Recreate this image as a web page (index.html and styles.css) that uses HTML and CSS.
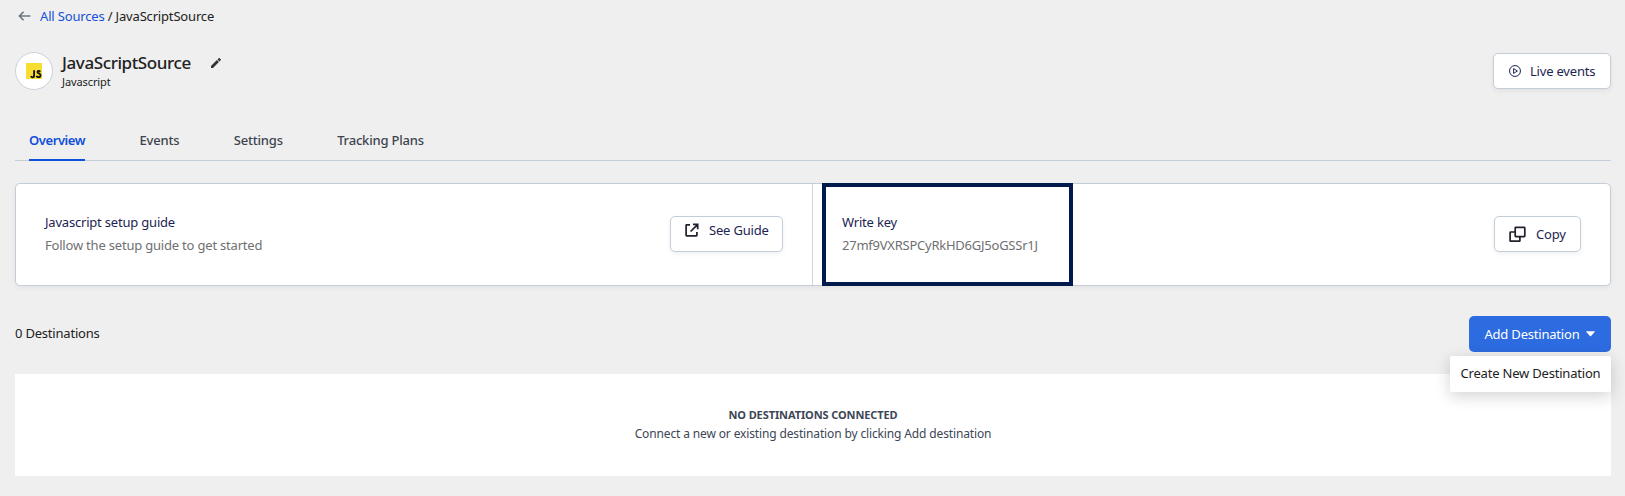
FILE: index.html
```html
<!DOCTYPE html>
<html lang="en">
<head>
<meta charset="utf-8">
<title>JavaScriptSource</title>
<link rel="stylesheet" href="styles.css">
</head>
<body>
<main class="page">
  <nav class="breadcrumb">
    <svg class="back" width="14" height="12" viewBox="0 0 14 12"><path d="M12.4 6H1.4M5.6 1.8 1.4 6l4.2 4.2"/></svg>
    <span><a class="link" href="#">All Sources</a> / JavaScriptSource</span>
  </nav>
  <header class="header">
    <div class="avatar"><span class="js-logo">
      <svg width="16" height="16" viewBox="0 0 16 16"><path d="M8.1 7.2v5.4c0 1.2-.6 1.7-1.5 1.7-.8 0-1.3-.4-1.6-1.1M14.2 8.8c-.4-.7-.8-1-1.5-1s-1.3.4-1.3 1.1c0 1.7 3.2 1.3 3.2 3.4 0 1.2-.8 1.9-2 1.9-1 0-1.8-.5-2.1-1.3"/></svg>
    </span></div>
    <div class="heading">
      <div class="title-row">
        <h1 class="title">JavaScriptSource</h1>
        <svg class="pencil" width="10" height="10" viewBox="0 0 10 10"><path d="M0 8 5.9 2.1l2 2L2 10H0zM6.5 1.5 7.7.3c.3-.3.7-.3 1 0l1 1c.3.3.3.7 0 1L8.5 3.5z"/></svg>
      </div>
      <div class="subtitle">Javascript</div>
    </div>
    <button class="button live">
      <svg class="icon" width="12" height="12" viewBox="0 0 12 12"><circle cx="6" cy="6" r="5.45"/><path d="M4.6 3.6v4.8L8.4 6z"/></svg>
      Live events
    </button>
  </header>
  <nav class="tabs">
    <a class="tab active">Overview</a>
    <a class="tab">Events</a>
    <a class="tab">Settings</a>
    <a class="tab">Tracking Plans</a>
  </nav>
  <section class="card">
    <div class="guide">
      <div class="info">
        <div class="label">Javascript setup guide</div>
        <div class="value">Follow the setup guide to get started</div>
      </div>
      <button class="button see-guide">
        <svg class="icon dark" width="14" height="14" viewBox="0 0 14 14"><path d="M5 1.8H1.7q-.6 0-.6.6v9.8q0 .6.6.6h9.6q.6 0 .6-.6V9M8 1.4h4.7v4.8M12.5 1.6 5.6 8.5"/></svg>
        See Guide
      </button>
    </div>
    <div class="key">
      <div class="key-box">
        <div class="label">Write key</div>
        <div class="value">27mf9VXRSPCyRkHD6GJ5oGSSr1J</div>
      </div>
      <button class="button copy">
        <svg class="icon dark" width="17" height="17" viewBox="0 0 17 17"><rect x="6.2" y="1.3" width="9.6" height="9.3" rx=".6"/><path d="M6 6H1.6q-.5 0-.5.5v8.2q0 .5.5.5h8.8q.5 0 .5-.5V11"/></svg>
        Copy
      </button>
    </div>
  </section>
  <section class="toolbar">
    <div class="count">0 Destinations</div>
    <div class="dropdown">
      <button class="add">Add Destination
        <svg width="9" height="6" viewBox="0 0 10 6"><path d="M.7 0h8.6q.9 0 .3.7L5.6 5.2q-.6.6-1.2 0L.4.7Q-.2 0 .7 0z" fill="#fff"/></svg>
      </button>
      <div class="menu">Create New Destination</div>
    </div>
  </section>
  <section class="empty">
    <div class="empty-title">NO DESTINATIONS CONNECTED</div>
    <div class="empty-text">Connect a new or existing destination by clicking Add destination</div>
  </section>
</main>
</body>
</html>
```
FILE: styles.css
```css
* { box-sizing: border-box; }
body {
  margin: 0;
  background: #efefef;
  color: #222;
  font: 13px/20px "Noto Sans", sans-serif;
  letter-spacing: -.2px;
}
.page { height: 496px; padding: 6px 14px 0 15px; }
.breadcrumb {
  display: flex;
  align-items: center;
  height: 20px;
  padding-left: 3px;
  gap: 8px;
  letter-spacing: -.17px;
}
.back { fill: none; stroke: #6b7580; stroke-width: 1.6; }
.link { color: #1551da; text-decoration: none; }
.header { display: flex; height: 38px; margin-top: 26px; align-items: flex-start; }
.avatar {
  display: grid;
  place-items: center;
  width: 38px;
  height: 38px;
  border: 1px solid #c9d2dc;
  border-radius: 50%;
  background: #fff;
}
.js-logo { width: 16px; height: 16px; background: #f5de31; }
.js-logo svg { display: block; fill: none; stroke: #111; stroke-width: 1.8; }
.heading { margin-left: 9px; }
.title-row { display: flex; height: 22px; align-items: center; gap: 20px; }
.title { margin: 0; font-size: 17px; line-height: 22px; font-weight: 500; letter-spacing: -.4px; }
.pencil { fill: #333; }
.subtitle { font-size: 11px; line-height: 16px; letter-spacing: -.1px; }
.button {
  display: flex;
  align-items: center;
  height: 36px;
  padding: 0 15px;
  border: 1px solid #c3ced9;
  border-radius: 5px;
  background: #fff;
  color: #1c2452;
  font: 13px/20px "Noto Sans", sans-serif;
  letter-spacing: -.2px;
  white-space: nowrap;
  box-shadow: 0 2px 5px rgba(0, 0, 0, .06);
}
.icon { flex: none; fill: none; stroke: #1c2452; stroke-width: 1; }
.icon.dark { stroke: #20212b; stroke-width: 1.7; }
.live { width: 118px; margin: 1px 0 0 auto; gap: 9px; }
.tabs {
  display: flex;
  height: 35px;
  margin-top: 36px;
  padding-left: 14px;
  gap: 54.4px;
  border-bottom: 1px solid #c3ced9;
}
.tab { height: 35px; padding-top: 4px; color: #3d4450; font-weight: 500; }
.tab.active {
  color: #0f4fdc;
  font-weight: 600;
  letter-spacing: -.42px;
  border-bottom: 2px solid #0f4fdc;
}
.card {
  display: flex;
  height: 103px;
  margin-top: 22px;
  border: 1px solid #c3ced9;
  border-radius: 5px;
  background: #fff;
  box-shadow: 0 2px 5px rgba(0, 0, 0, .05);
}
.guide {
  display: flex;
  width: 797px;
  padding: 32px 29px 0 29px;
  align-items: flex-start;
  justify-content: space-between;
  border-right: 1px solid #d2d6da;
}
.info { margin-top: -4px; }
.label { line-height: 20px; margin-bottom: 3px; color: #1c2452; }
.value { line-height: 20px; color: #6f7072; }
.see-guide { width: 113px; gap: 10px; padding: 0 14px 8px; }
.key { display: flex; flex: 1; padding: 0 29px 0 9px; align-items: flex-start; justify-content: space-between; }
.key-box {
  width: 251px;
  height: 103px;
  margin-top: -1px;
  padding: 25px 16px 0;
  border: 4px solid #001a4d;
  background: #fff;
}
.key-box .value { letter-spacing: -.24px; }
.copy { width: 87px; gap: 10px; margin-top: 32px; padding: 0 14px; }
.toolbar { display: flex; height: 36px; margin-top: 30px; align-items: center; justify-content: space-between; }
.count { padding-bottom: 2px; }
.dropdown { position: relative; }
.add {
  display: flex;
  align-items: center;
  justify-content: center;
  gap: 6px;
  width: 142px;
  height: 36px;
  padding: 0 1px 0 0;
  border: 0;
  border-radius: 5px;
  background: #2d6be0;
  color: #fff;
  font: 13px/20px "Noto Sans", sans-serif;
  letter-spacing: -.2px;
}
.menu {
  position: absolute;
  top: 40px;
  right: 0;
  width: 161px;
  height: 36px;
  padding: 7px 0;
  border-radius: 2px;
  background: #fff;
  text-align: center;
  white-space: nowrap;
  box-shadow: 0 4px 16px rgba(0, 0, 0, .18);
}
.empty { height: 102px; margin-top: 22px; padding-top: 32px; background: #fff; color: #3d4656; text-align: center; }
.empty-title { font-size: 11px; line-height: 18px; font-weight: 700; letter-spacing: -.1px; }
.empty-text { font-size: 12px; line-height: 20px; letter-spacing: -.14px; }
```
